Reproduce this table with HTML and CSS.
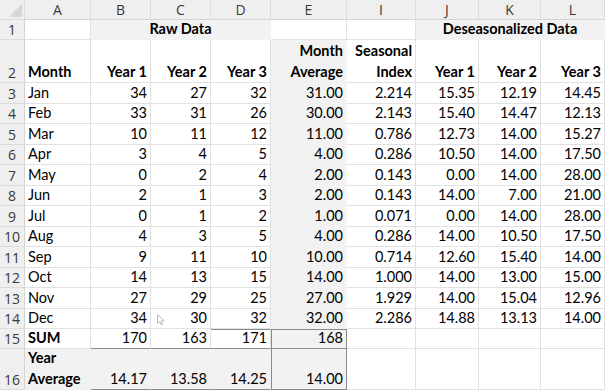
FILE: index.html
```html
<!DOCTYPE html>
<html>
<head>
<meta charset="utf-8">
<link rel="stylesheet" href="styles.css">
</head>
<body>
<div class="sheet">
  <div class="corner"><svg class="tri" width="14" height="14" viewBox="0 0 14 14"><polygon points="14,1 14,14 1,14" fill="#d6d6d6"/></svg></div>
  <div class="ch">A</div><div class="ch">B</div><div class="ch">C</div><div class="ch">D</div><div class="ch">E</div><div class="ch">I</div><div class="ch">J</div><div class="ch">K</div><div class="ch last">L</div>

  <div class="rh">1</div>
  <div class="c"></div>
  <div class="c f b ctr span3">Raw Data</div>
  <div class="c"></div>
  <div class="c"></div>
  <div class="c f b ctr span3">Deseasonalized Data</div>

  <div class="rh">2</div>
  <div class="c b">Month</div>
  <div class="c b r">Year 1</div>
  <div class="c b r">Year 2</div>
  <div class="c b r">Year 3</div>
  <div class="c f b r two"><span>Month</span><span>Average</span></div>
  <div class="c b r two"><span>Seasonal</span><span>Index</span></div>
  <div class="c b r">Year 1</div>
  <div class="c b r">Year 2</div>
  <div class="c b r">Year 3</div>

  <div class="rh">3</div><div class="c">Jan</div><div class="c r">34</div><div class="c r">27</div><div class="c r">32</div><div class="c f r">31.00</div><div class="c r">2.214</div><div class="c r">15.35</div><div class="c r">12.19</div><div class="c r">14.45</div>
  <div class="rh">4</div><div class="c">Feb</div><div class="c r">33</div><div class="c r">31</div><div class="c r">26</div><div class="c f r">30.00</div><div class="c r">2.143</div><div class="c r">15.40</div><div class="c r">14.47</div><div class="c r">12.13</div>
  <div class="rh">5</div><div class="c">Mar</div><div class="c r">10</div><div class="c r">11</div><div class="c r">12</div><div class="c f r">11.00</div><div class="c r">0.786</div><div class="c r">12.73</div><div class="c r">14.00</div><div class="c r">15.27</div>
  <div class="rh">6</div><div class="c">Apr</div><div class="c r">3</div><div class="c r">4</div><div class="c r">5</div><div class="c f r">4.00</div><div class="c r">0.286</div><div class="c r">10.50</div><div class="c r">14.00</div><div class="c r">17.50</div>
  <div class="rh">7</div><div class="c">May</div><div class="c r">0</div><div class="c r">2</div><div class="c r">4</div><div class="c f r">2.00</div><div class="c r">0.143</div><div class="c r">0.00</div><div class="c r">14.00</div><div class="c r">28.00</div>
  <div class="rh">8</div><div class="c">Jun</div><div class="c r">2</div><div class="c r">1</div><div class="c r">3</div><div class="c f r">2.00</div><div class="c r">0.143</div><div class="c r">14.00</div><div class="c r">7.00</div><div class="c r">21.00</div>
  <div class="rh">9</div><div class="c">Jul</div><div class="c r">0</div><div class="c r">1</div><div class="c r">2</div><div class="c f r">1.00</div><div class="c r">0.071</div><div class="c r">0.00</div><div class="c r">14.00</div><div class="c r">28.00</div>
  <div class="rh">10</div><div class="c">Aug</div><div class="c r">4</div><div class="c r">3</div><div class="c r">5</div><div class="c f r">4.00</div><div class="c r">0.286</div><div class="c r">14.00</div><div class="c r">10.50</div><div class="c r">17.50</div>
  <div class="rh">11</div><div class="c">Sep</div><div class="c r">9</div><div class="c r">11</div><div class="c r">10</div><div class="c f r">10.00</div><div class="c r">0.714</div><div class="c r">12.60</div><div class="c r">15.40</div><div class="c r">14.00</div>
  <div class="rh">12</div><div class="c">Oct</div><div class="c r">14</div><div class="c r">13</div><div class="c r">15</div><div class="c f r">14.00</div><div class="c r">1.000</div><div class="c r">14.00</div><div class="c r">13.00</div><div class="c r">15.00</div>
  <div class="rh">13</div><div class="c">Nov</div><div class="c r">27</div><div class="c r">29</div><div class="c r">25</div><div class="c f r">27.00</div><div class="c r">1.929</div><div class="c r">14.00</div><div class="c r">15.04</div><div class="c r">12.96</div>
  <div class="rh">14</div><div class="c">Dec</div><div class="c r">34</div><div class="c r cursor-cell">30<svg class="cursor" width="8" height="12" viewBox="0 0 8 12"><path d="M0.5 0.5 L0.5 9.5 L2.7 7.4 L4.3 11 L5.6 10.4 L4.1 6.9 L7.2 6.9 Z" fill="#fff" stroke="#b9b9b9" stroke-width="1"/></svg></div><div class="c r">32</div><div class="c f r">32.00</div><div class="c r">2.286</div><div class="c r">14.88</div><div class="c r">13.13</div><div class="c r">14.00</div>

  <div class="rh">15</div>
  <div class="c b">SUM</div>
  <div class="c r bb">170</div>
  <div class="c r bb">163</div>
  <div class="c r bb bt">171</div>
  <div class="c f r bb bt bl br">168</div>
  <div class="c"></div><div class="c"></div><div class="c"></div><div class="c"></div>

  <div class="rh">16</div>
  <div class="c f b two"><span>Year</span><span>Average</span></div>
  <div class="c f r bb">14.17</div>
  <div class="c f r bb">13.58</div>
  <div class="c f r bb">14.25</div>
  <div class="c f r bb bl br">14.00</div>
  <div class="c"></div><div class="c"></div><div class="c"></div><div class="c"></div>
</div>
</body>
</html>
```
FILE: styles.css
```css
html, body {
  margin: 0;
  padding: 0;
  background: #ffffff;
}

.sheet {
  display: grid;
  grid-template-columns: 25px 66px 60px 60px 60px 76px 69px 63px 62px 64px;
  grid-template-rows: 20px 20px 43px repeat(12, 20.5px) 20px 41px;
  width: 605px;
  height: 390px;
  overflow: hidden;
  font-family: Lato, "Liberation Sans", sans-serif;
  font-size: 14.5px;
  color: #000;
}

.corner {
  background: #efefef;
  border-right: 1px solid #d9d9d9;
  border-bottom: 1px solid #d9d9d9;
  box-sizing: border-box;
  position: relative;
}

.tri {
  position: absolute;
  right: 2px;
  bottom: 2px;
}

.ch {
  background: #efefef;
  border-right: 1px solid #dcdcdc;
  border-bottom: 1px solid #d4d4d4;
  box-sizing: border-box;
  display: flex;
  align-items: center;
  justify-content: center;
  font-family: "Open Sans", "Noto Sans", sans-serif;
  font-size: 14px;
  color: #3a3a3a;
  padding-bottom: 1px;
}

.rh {
  background: #efefef;
  border-right: 1px solid #d4d4d4;
  border-bottom: 1px solid #dcdcdc;
  box-sizing: border-box;
  display: flex;
  align-items: flex-end;
  justify-content: center;
  font-family: "Open Sans", "Noto Sans", sans-serif;
  font-size: 14px;
  color: #3a3a3a;
  line-height: 19px;
  padding-bottom: 0;
}

.c {
  box-sizing: border-box;
  border-right: 1px solid #e1e1e1;
  border-bottom: 1px solid #e1e1e1;
  display: flex;
  align-items: flex-end;
  padding: 0 3px 1px 3px;
  line-height: 18px;
  white-space: nowrap;
  overflow: hidden;
  position: relative;
}

.r { justify-content: flex-end; }
.ctr { justify-content: center; }
.b { font-weight: 700; }

.f {
  background: #f2f2f2;
  border-right-color: #f2f2f2;
  border-bottom-color: #f2f2f2;
}

.span3 { grid-column: span 3; }

.two {
  flex-direction: column;
  justify-content: flex-end;
  line-height: 21px;
  padding-bottom: 0;
}

.two.r { align-items: flex-end; }
.two:not(.r) { align-items: flex-start; }

.bb { border-bottom: 1px solid #8a8a8a; }
.bt { border-top: 1px solid #8a8a8a; }
.bl { border-left: 1px solid #8a8a8a; }
.br { border-right: 1px solid #8a8a8a; }

.cursor-cell { overflow: visible; }

.cursor {
  position: absolute;
  left: 6px;
  top: 5px;
}
```
